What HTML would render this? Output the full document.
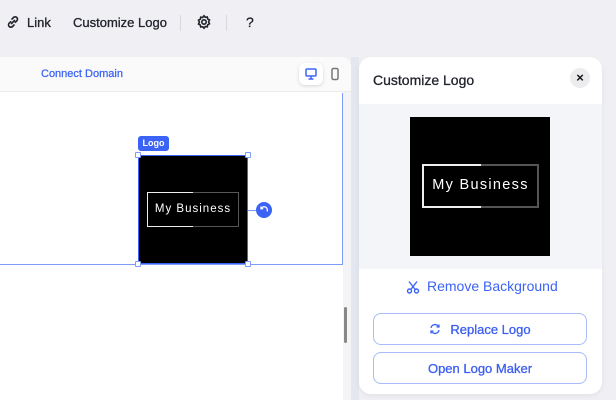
<!DOCTYPE html>
<html><head><style>
*{margin:0;padding:0;box-sizing:border-box}
body{width:616px;height:400px;overflow:hidden;background:#f0f0f4;font-family:"Liberation Sans",sans-serif;position:relative;color:#111}
.a{position:absolute}
.t{font-size:13px;color:#20232c;-webkit-text-stroke:0.3px #20232c}
.lg{background:#000;}
.btn{position:absolute;left:373px;width:214px;height:32px;border:1px solid #a9bbfa;border-radius:8px;color:#3b5ef2;font-size:13px;-webkit-text-stroke:0.3px #3b5ef2;display:flex;align-items:center;justify-content:center;background:#fff}
</style></head><body>
<!-- toolbar -->
<svg class="a" style="left:6px;top:15px" width="14" height="14" viewBox="0 0 14 14" fill="none" stroke="#20232c" stroke-width="1.6" stroke-linecap="round"><path d="M6 4l1.5-1.5a2.3 2.3 0 013.3 3.3L9.3 7.3M8 10l-1.5 1.5a2.3 2.3 0 01-3.3-3.3L4.7 6.7M5.5 8.5l3-3"/></svg>
<div class="a t" style="left:27px;top:15px">Link</div>
<div class="a t" style="left:73px;top:15px">Customize Logo</div>
<div class="a" style="left:180px;top:15px;width:1px;height:16px;background:#d8d8de"></div>
<svg class="a" style="left:196px;top:14px" width="16" height="16" viewBox="0 0 16 16" fill="none" stroke="#20232c" stroke-width="1.6"><circle cx="8" cy="8" r="2.2"/><path d="M8 1.8l1.3 1.5 2-.3.4 2 1.8 1-.9 1.9.9 1.9-1.8 1-.4 2-2-.3L8 14.2l-1.3-1.5-2 .3-.4-2-1.8-1 .9-1.9-.9-1.9 1.8-1 .4-2 2 .3z"/></svg>
<div class="a" style="left:226px;top:15px;width:1px;height:16px;background:#d8d8de"></div>
<div class="a t" style="left:246px;top:14px;font-size:14px">?</div>
<!-- canvas -->
<div class="a" style="left:0;top:57px;width:351px;height:343px;background:#fff;border-top-right-radius:10px;overflow:hidden">
 <div class="a" style="left:0;top:0;width:351px;height:35px;background:#fafafb;border-bottom:1px solid #ececef"></div>
 <div class="a" style="left:41px;top:11px;font-size:11px;color:#3b63f5;-webkit-text-stroke:0.25px #3b63f5">Connect Domain</div>
 <div class="a" style="left:299px;top:6px;width:24px;height:22px;background:#fff;border-radius:6px;box-shadow:0 1px 3px rgba(0,0,0,.15)"></div>
 <svg class="a" style="left:305px;top:11px" width="12" height="12" viewBox="0 0 12 12" fill="none" stroke="#3b63f5" stroke-width="1.5"><rect x="1" y="1" width="10" height="7" rx="1"/><path d="M6 8v2.5M3.5 11h5"/></svg>
 <svg class="a" style="left:330px;top:10px" width="10" height="14" viewBox="0 0 10 14" fill="none" stroke="#777" stroke-width="1.5"><rect x="2" y="1.5" width="6" height="11" rx="1.5"/></svg>
 <div class="a" style="left:343px;top:35px;width:8px;height:308px;background:#f4f4f6"></div>
 <div class="a" style="left:344px;top:250px;width:3px;height:36px;background:#888;border-radius:2px"></div>
</div>
<div class="a" style="left:342px;top:93px;width:1px;height:172px;background:#7d9cf7"></div>
<div class="a" style="left:0;top:264px;width:343px;height:1px;background:#7d9cf7"></div>
<div class="a" style="left:351px;top:57px;width:8px;height:343px;background:#e4e6f0"></div>
<!-- canvas logo -->
<div class="a" style="left:138px;top:136px;width:31px;height:15px;background:#3b63f5;border-radius:3px;color:#fff;font-size:9px;font-weight:bold;text-align:center;line-height:15px">Logo</div>
<div class="a lg" style="left:138px;top:155px;width:110px;height:109px;border:1px solid #3b63f5"></div>
<div class="a" style="left:147px;top:192px;width:92px;height:35px;border:1.5px solid #555"></div>
<div class="a" style="left:147px;top:192px;width:46px;height:35px;border:1.5px solid #eee;border-right:none"></div>
<div class="a" style="left:147px;top:203px;width:92px;text-align:center;color:#fff;font-size:11.5px;letter-spacing:1px">My Business</div>
<div class="a" style="left:248px;top:210px;width:8px;height:1px;background:#7d9cf7"></div>
<div class="a" style="left:256px;top:202px;width:16px;height:16px;border-radius:50%;background:#3b63f5"></div>
<svg class="a" style="left:259px;top:205px" width="10" height="10" viewBox="0 0 10 10" fill="none" stroke="#fff" stroke-width="1.3"><path d="M2.2 3.5A3.2 3.2 0 118 6.5M2 1.5v2.2h2.2"/></svg>
<div class="a" style="left:135px;top:152px;width:6px;height:6px;background:#fff;border:1px solid #7d9cf7;border-radius:1px"></div>
<div class="a" style="left:245px;top:152px;width:6px;height:6px;background:#fff;border:1px solid #7d9cf7;border-radius:1px"></div>
<div class="a" style="left:135px;top:261px;width:6px;height:6px;background:#fff;border:1px solid #7d9cf7;border-radius:1px"></div>
<div class="a" style="left:245px;top:261px;width:6px;height:6px;background:#fff;border:1px solid #7d9cf7;border-radius:1px"></div>
<!-- right panel -->
<div class="a" style="left:359px;top:57px;width:243px;height:337px;background:#fff;border-radius:12px;overflow:hidden;box-shadow:0 2px 6px rgba(0,0,0,.06)">
 <div class="a" style="left:0;top:47px;width:243px;height:165px;background:#f4f5f9"></div>
</div>
<div class="a" style="left:373px;top:72px;font-size:14px;color:#20232c;-webkit-text-stroke:0.3px #20232c">Customize Logo</div>
<div class="a" style="left:570px;top:68px;width:20px;height:20px;border-radius:50%;background:#ececef;text-align:center;font-size:13px;line-height:20px;font-weight:bold">×</div>
<div class="a lg" style="left:410px;top:117px;width:140px;height:139px"></div>
<div class="a" style="left:422px;top:164px;width:117px;height:44px;border:2px solid #555"></div>
<div class="a" style="left:422px;top:164px;width:59px;height:44px;border:2px solid #eee;border-right:none"></div>
<div class="a" style="left:422px;top:177px;width:117px;text-align:center;color:#fff;font-size:14.5px;letter-spacing:1.3px">My Business</div>
<svg class="a" style="left:406px;top:280px" width="14" height="14" viewBox="0 0 14 14" fill="none" stroke="#3b63f5" stroke-width="1.4"><circle cx="3.5" cy="11" r="2"/><circle cx="10.5" cy="11" r="2"/><path d="M4.8 9.5L11 1.5M9.2 9.5L3 1.5"/></svg>
<div class="a" style="left:427px;top:278px;font-size:14px;color:#3b63f5">Remove Background</div>
<div class="btn" style="top:313px"><svg width="12" height="12" viewBox="0 0 12 12" fill="none" stroke="#3b63f5" stroke-width="1.3" style="margin-right:9px"><path d="M2 5a4 4 0 017-2l1 1M10 7a4 4 0 01-7 2L2 8M10 1.5v2.5H7.5M2 10.5V8h2.5"/></svg>Replace Logo</div>
<div class="btn" style="top:352px">Open Logo Maker</div>
</body></html>
